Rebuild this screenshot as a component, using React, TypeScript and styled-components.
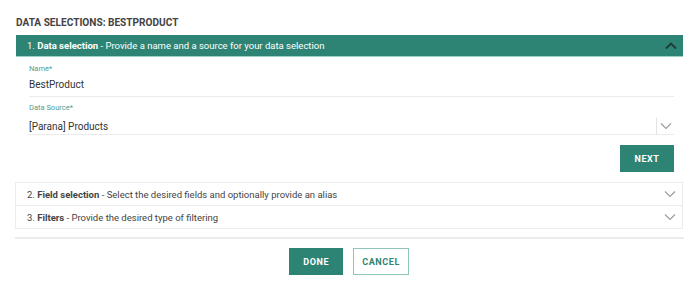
import React from "react";
import styled, { createGlobalStyle } from "styled-components";

const Global = createGlobalStyle`
  html, body { margin: 0; padding: 0; background: #fff; }
  body { font-family: Roboto, "Liberation Sans", sans-serif; color: #333; }
  * { box-sizing: border-box; }
`;

const TEAL = "#2e8474";

const Page = styled.div`
  width: 700px;
  height: 288px;
  padding: 16px 17px 0 15px;
  display: flex;
  flex-direction: column;
`;

const Title = styled.h1`
  margin: 0 0 0 1px;
  font-size: 10.1px;
  line-height: 13px;
  font-weight: 700;
  color: #444;
  height: 19px;
`;

const Accordion = styled.div`
  display: flex;
  flex-direction: column;
`;

const Panel = styled.section<{ $open?: boolean }>`
  display: flex;
  flex-direction: column;
  border: 1px solid #ececec;
  margin-top: -1px;
  &:first-child { border: none; margin: 0 0 11px 0; }
`;

const Header = styled.div<{ $open?: boolean }>`
  display: flex;
  align-items: center;
  justify-content: space-between;
  height: 22px;
  padding: 0 6px 0 11px;
  margin-left: ${(p) => (p.$open ? "1px" : "0")};
  background: ${(p) => (p.$open ? TEAL : "#fff")};
  color: ${(p) => (p.$open ? "#fff" : "#444")};
  border-bottom: ${(p) => (p.$open ? "1px solid #9ccfc5" : "none")};
  font-size: 9.5px;
`;

const HeaderText = styled.span`
  white-space: nowrap;
  b { font-weight: 700; }
`;

const Chevron = styled.svg<{ $dark?: boolean }>`
  width: 12px;
  height: 8px;
  fill: none;
  stroke: ${(p) => (p.$dark ? "#1d3b36" : "#9a9a9a")};
  stroke-width: ${(p) => (p.$dark ? 1.8 : 1.1)};
`;

const Body = styled.div`
  display: flex;
  flex-direction: column;
  padding: 7px 9px 0 14px;
`;

const Field = styled.div`
  display: flex;
  flex-direction: column;
  border-bottom: 1px solid #ebebeb;
`;

const Label = styled.label`
  font-size: 7.5px;
  line-height: 9px;
  color: #4f9e8f;
  height: 10px;
`;

const Value = styled.div`
  font-size: 10px;
  line-height: 12px;
  color: #333;
  height: 22px;
  padding-top: 5px;
  display: flex;
  align-items: flex-start;
  justify-content: space-between;
`;

const SelectValue = styled(Value)`
  height: 21px;
  padding-top: 7px;
  align-items: center;
`;

const SelectArrow = styled.div`
  display: flex;
  align-items: center;
  justify-content: center;
  width: 18px;
  height: 17px;
  border-left: 1px solid #e3e3e3;
  margin-bottom: 2px;
`;

const FieldGap = styled.div`
  height: 6px;
`;

const Actions = styled.div<{ $center?: boolean }>`
  display: flex;
  justify-content: ${(p) => (p.$center ? "center" : "flex-end")};
  gap: 10px;
`;

const Button = styled.button<{ $outline?: boolean }>`
  height: 27px;
  padding: 0 ${(p) => (p.$outline ? "8px" : "12px")};
  min-width: 54px;
  font-family: Roboto, "Liberation Sans", sans-serif;
  font-size: 9px;
  font-weight: 700;
  letter-spacing: 0.6px;
  border: 1px solid ${(p) => (p.$outline ? "#8fc5bb" : TEAL)};
  background: ${(p) => (p.$outline ? "#fff" : TEAL)};
  color: ${(p) => (p.$outline ? TEAL : "#fff")};
  cursor: pointer;
`;

const NextRow = styled(Actions)`
  margin-top: 10px;
`;

const Divider = styled.div`
  margin-top: 8px;
  height: 2px;
  background: #ececec;
  margin-right: -1px;
`;

const Footer = styled(Actions)`
  margin-top: 9px;
`;

const Down = ({ dark }: { dark?: boolean }) => (
  <Chevron $dark={dark} viewBox="0 0 12 8">
    <polyline points="1,1.5 6,6.5 11,1.5" />
  </Chevron>
);

const Up = () => (
  <Chevron $dark viewBox="0 0 12 8">
    <polyline points="1,6.5 6,1.5 11,6.5" />
  </Chevron>
);

export default function App() {
  return (
    <>
      <Global />
      <Page>
        <Title>DATA SELECTIONS: BESTPRODUCT</Title>
        <Accordion>
          <Panel $open>
            <Header $open>
              <HeaderText>
                1. <b>Data selection</b> - Provide a name and a source for your data selection
              </HeaderText>
              <Up />
            </Header>
            <Body>
              <Field>
                <Label>Name*</Label>
                <Value>BestProduct</Value>
              </Field>
              <FieldGap />
              <Field>
                <Label>Data Source*</Label>
                <SelectValue>
                  [Parana] Products
                  <SelectArrow>
                    <Down />
                  </SelectArrow>
                </SelectValue>
              </Field>
              <NextRow>
                <Button>NEXT</Button>
              </NextRow>
            </Body>
          </Panel>
          <Panel>
            <Header>
              <HeaderText>
                2. <b>Field selection</b> - Select the desired fields and optionally provide an alias
              </HeaderText>
              <Down />
            </Header>
          </Panel>
          <Panel>
            <Header>
              <HeaderText>
                3. <b>Filters</b> - Provide the desired type of filtering
              </HeaderText>
              <Down />
            </Header>
          </Panel>
        </Accordion>
        <Divider />
        <Footer $center>
          <Button>DONE</Button>
          <Button $outline>CANCEL</Button>
        </Footer>
      </Page>
    </>
  );
}
